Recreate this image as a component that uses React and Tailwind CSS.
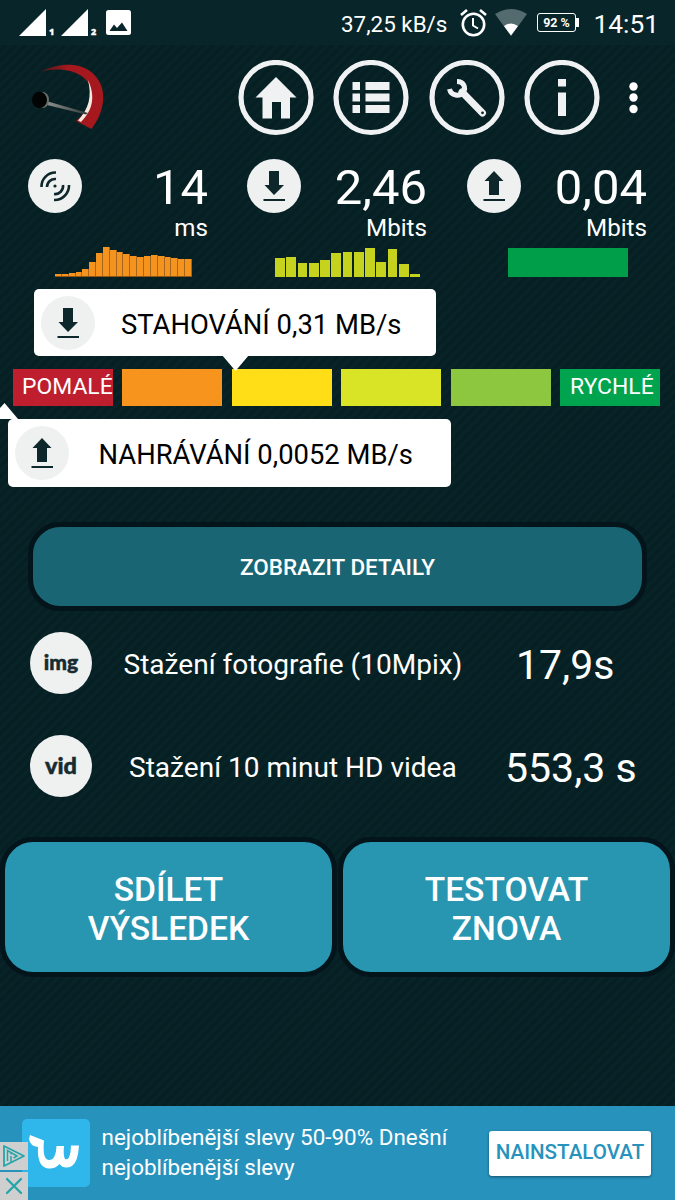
import React from "react";

const ORANGE = [3, 3, 4, 5, 8, 15, 24, 30, 27, 25, 23, 21, 20, 21, 22, 21, 20, 19, 18, 18];
const LIME = [19, 20, 14, 14, 17, 24, 25, 25, 29, 15, 28, 13, 3];

function Signal({ n }) {
  return (
    <div className="flex items-end">
      <svg width="28" height="27" viewBox="0 0 28 27"><path d="M0 27L27 0V27Z" fill="#fff" /></svg>
      <span className="ml-[2px] w-[12px] font-['Open_Sans'] text-[9px] leading-[9px] font-extrabold [-webkit-text-stroke:0.3px_white]">{n}</span>
    </div>
  );
}

function StatusBar() {
  return (
    <div className="flex h-[45px] shrink-0 bg-[#08252a]">
      <div className="flex pt-[9px] pl-[19px] h-[36px]">
        <Signal n="1" />
        <Signal n="2" />
      </div>
      <svg className="ml-[3px] mt-[10px]" width="25" height="25" viewBox="0 0 25 25">
        <rect width="25" height="25" rx="2.5" fill="#fff" />
        <path d="M3.500 21L8 14.500L11 18L16 12.500L21.500 21Z" fill="#08252a" />
      </svg>
      <span className="ml-[210px] w-[119px] mt-[9px] text-[22.400px] leading-[30px] whitespace-nowrap">37,25 kB/s</span>
      <svg className="mt-[9px]" width="27" height="28" viewBox="0 0 27 28" fill="none" stroke="#fff" strokeWidth="2.6">
        <circle cx="13.5" cy="15.5" r="10.7" />
        <path d="M1 6L7 1M26 6L20 1" />
        <path d="M13 9V16.5L18 19.5" strokeWidth="2" />
      </svg>
      <svg className="ml-[7px] mt-[9px]" width="34" height="27" viewBox="0 0 34 27">
        <path d="M1 5Q17 -5 33 5L17 27Z" fill="#536a6e" />
        <path d="M10 17Q17 12 24 17L17 26.500Z" fill="#fff" />
      </svg>
      <div className="ml-[9px] mt-[13px] h-[19px] w-[39px] rounded-[3px] border-[1.5px] border-white text-center text-[12.5px] leading-[17px] font-bold">92 %</div>
      <div className="mt-[18px] h-[9px] w-[2.5px] bg-white" />
      <span className="ml-[15px] mt-[9px] text-[26.300px] leading-[30px]">14:51</span>
    </div>
  );
}

function Ring({ children }) {
  return (
    <svg width="76" height="76" viewBox="0 0 76 76">
      <circle cx="38" cy="37.500" r="35" fill="none" stroke="#eff1f2" strokeWidth="5.2" />
      {children}
    </svg>
  );
}

function Header() {
  return (
    <div className="flex h-[105px] shrink-0 pt-[15px]">
      <svg className="ml-[28px]" width="80" height="76" viewBox="28 60 80 76">
        <defs>
          <linearGradient id="needle" x1="0" x2="1"><stop offset="0" stopColor="#8b8f8d" /><stop offset="1" stopColor="#33393a" /></linearGradient>
          <linearGradient id="arc" x1="0" x2="1"><stop offset="0" stopColor="#4a1719" /><stop offset=".45" stopColor="#a5191e" /></linearGradient>
        </defs>
        <path d="M40 72C68 58 93 65 101 85C107 101 100 118 91.500 129L76 121C86 113 91 102 91 92C90 74 66 65 40 72Z" fill="url(#arc)" />
        <path d="M88 80C95 95 94 109 81 122L78 120.500C89 109 92 96 88 80Z" fill="#f5e9df" />
        <path d="M48 101.500L88 113L86 114.500L47 105Z" fill="url(#needle)" />
        <ellipse cx="42.500" cy="100" rx="6.500" ry="8" fill="#6b706d" />
        <ellipse cx="39.500" cy="100" rx="7.500" ry="8.300" fill="#020303" />
      </svg>
      <div className="ml-[129.500px] flex gap-[19.500px]">
        <Ring><path d="M38 17L58.500 37.500H52V58.500H43V42H34V58.500H24.500V37.500H17.500Z" fill="#eff1f2" /></Ring>
        <Ring>
          <path d="M19.500 22h7.500v8h-7.500zM32.500 22h24v8h-24zM19.500 33.500h7.500v8h-7.500zM32.500 33.500h24v8h-24zM19.500 45h7.500v8h-7.500zM32.500 45h24v8h-24z" fill="#eff1f2" />
        </Ring>
        <Ring>
          <path d="M28 21.500C35 21.500 37 27.500 34.500 32C31 37 22 36 20.500 29" fill="none" stroke="#eff1f2" strokeWidth="5" />
          <path d="M33 32L53.500 53" stroke="#eff1f2" strokeWidth="7" strokeLinecap="round" />
          <circle cx="53.500" cy="52.800" r="1.400" fill="#08252a" />
        </Ring>
        <Ring><path d="M34 19h8v7.500h-8zM34 32.500h8v23.500h-8z" fill="#eff1f2" /></Ring>
      </div>
      <svg className="ml-[28px] mt-[20px]" width="10" height="34" viewBox="0 0 10 34" fill="#fff">
        <circle cx="5.500" cy="6.500" r="4.200" /><circle cx="5.500" cy="17.500" r="4.200" /><circle cx="5.500" cy="29" r="4.200" />
      </svg>
    </div>
  );
}

function Disc({ kind }) {
  return (
    <svg className="shrink-0" width="54" height="54" viewBox="0 0 54 54">
      <circle cx="27" cy="27" r="27" fill="#eff1f1" />
      {kind === "ping" && (
        <g fill="none" stroke="#0d272b" strokeWidth="2.600">
          <circle cx="27" cy="27" r="1.600" fill="#0d272b" stroke="none" />
          <path d="M19 28A8 8 0 0 1 28 20M13.500 28A14 14 0 0 1 28 13.500M35 26A8 8 0 0 1 26 35M41 26A14.500 14.500 0 0 1 26 41" />
        </g>
      )}
      {kind === "down" && <path d="M22 12H32V26H37L27 36L17.500 26H22ZM16.500 40H38V42H16.500Z" fill="#0d272b" />}
      {kind === "up" && <path d="M22 36H32V22H36.500L27 12L17.500 22H22ZM16.500 40H38V42H16.500Z" fill="#0d272b" />}
    </svg>
  );
}

function Metric({ kind, value, unit, className }) {
  return (
    <div className={"flex justify-between " + className}>
      <Disc kind={kind} />
      <div className="flex flex-col items-end whitespace-nowrap">
        <span className="text-[49px] leading-[58px]">{value}</span>
        <span className="text-[24.200px] leading-[30px] -mt-[4px]">{unit}</span>
      </div>
    </div>
  );
}

function Metrics() {
  return (
    <div className="h-[138.500px] shrink-0">
      <div className="flex h-[96.500px] pt-[9px]">
        <Metric kind="ping" value="14" unit="ms" className="ml-[28px] w-[180px]" />
        <Metric kind="down" value="2,46" unit="Mbits" className="ml-[39px] w-[180px]" />
        <Metric kind="up" value="0,04" unit="Mbits" className="ml-[40px] w-[180px]" />
      </div>
      <div className="flex h-[30px] items-end">
        <div className="ml-[55px] flex w-[137px] items-end border-b border-[#8f5513]">
          {ORANGE.map((h, i) => <div key={i} className="flex-1 border-r border-[#a8661a] bg-[#f4941f]" style={{ height: h - 1 }} />)}
        </div>
        <div className="ml-[83px] flex w-[145px] items-end gap-[1.500px]">
          {LIME.map((h, i) => <div key={i} className="flex-1 bg-[#c5d31f]" style={{ height: h }} />)}
        </div>
        <div className="ml-[88px] h-[29px] w-[120px] bg-[#009e49]" />
      </div>
    </div>
  );
}

function SpeedScale() {
  return (
    <div className="h-[233.500px] shrink-0">
      <div className="relative ml-[34px] flex h-[67px] w-[402px] rounded-[5px] bg-white pt-[7px] pl-[7px] text-black">
        <Disc kind="down" />
        <span className="ml-[26px] mt-[13px] text-[27.400px] leading-[32px] whitespace-nowrap">STAHOVÁNÍ 0,31 MB/s</span>
        <svg className="absolute left-[188px] top-[66px]" width="27" height="16" viewBox="0 0 27 16"><path d="M0 0H27L13.500 16Z" fill="#fff" /></svg>
      </div>
      <div className="mt-[13px] ml-[13px] grid h-[37px] w-[647px] grid-cols-6 gap-[9.500px] text-[22.900px] leading-[36px]">
        <div className="overflow-hidden bg-[#be1e2d] pl-[9px]">POMALÉ</div>
        <div className="bg-[#f7941e]" />
        <div className="bg-[#ffde17]" />
        <div className="bg-[#d9e426]" />
        <div className="bg-[#8dc63f]" />
        <div className="overflow-hidden bg-[#00a44f] pl-[10px]">RYCHLÉ</div>
      </div>
      <div className="relative mt-[13px] ml-[8px] flex h-[68px] w-[443px] rounded-[5px] bg-white pt-[7px] pl-[7px] text-black">
        <Disc kind="up" />
        <span className="ml-[29.500px] mt-[13px] text-[27.400px] leading-[32px] whitespace-nowrap">NAHRÁVÁNÍ 0,0052 MB/s</span>
        <svg className="absolute -left-[9px] -top-[16px]" width="19" height="17" viewBox="0 0 19 17"><path d="M0 16V6L5.500 0L19 16Z" fill="#fff" /></svg>
      </div>
    </div>
  );
}

function Download({ badge, badgeClass, label, value, labelClass, valueClass }) {
  return (
    <div className="flex h-[103px] shrink-0">
      <div className={"ml-[30px] flex h-[62px] w-[62px] justify-center rounded-full bg-[#eff0f0] font-['Lato'] font-black text-[#172b30] [-webkit-text-stroke:0.5px_#172b30] " + badgeClass}>{badge}</div>
      <span className={"mt-[16px] w-[370px] text-[28.050px] leading-[33px] whitespace-nowrap " + labelClass}>{label}</span>
      <span className={"mt-[9px] text-[41px] leading-[48px] whitespace-nowrap " + valueClass}>{value}</span>
    </div>
  );
}

function AdBanner() {
  return (
    <div className="flex h-[94px] shrink-0 bg-[#2793bd]">
      <div className="relative w-[90px]">
        <div className="ml-[22px] mt-[13px] h-[68px] w-[68px] rounded-[5px] bg-[#2fb7ec]">
          <svg width="68" height="68" viewBox="0 0 68 68">
            <path d="M8 16L22 21.500Q21 31 22.500 37Q25 43 30.500 40Q34 37 34.500 27H42Q41 36 43 40Q47 42 48.500 33L49 26.500H57Q56 43 50 47Q42 51 37.500 45Q32 51 24 49Q15 46 16 28Q8 27 7 20Z" fill="#fff" />
          </svg>
        </div>
        <div className="absolute left-0 top-[36px] flex flex-col gap-[2px]">
          <svg className="bg-[#cfcfcf]" width="28" height="28" viewBox="0 0 28 28" fill="none" stroke="#24a5aa" strokeWidth="1.800">
            <path d="M4 4V24L24 14Z" strokeLinejoin="round" /><path d="M7.500 19V8.500L17 14L13.500 16M11 14v6M11 10.500v2" strokeWidth="1.500" />
          </svg>
          <svg className="bg-[#cfcfcf]" width="28" height="28" viewBox="0 0 28 28" stroke="#24a5aa" strokeWidth="2.300" strokeLinecap="round"><path d="M7 7L21 21M21 7L7 21" /></svg>
        </div>
      </div>
      <div className="ml-[11.500px] mt-[16px] w-[387.500px] text-[22.430px] leading-[30px] whitespace-nowrap">
        <div>nejoblíbenější slevy 50-90% Dnešní</div>
        <div>nejoblíbenější slevy</div>
      </div>
      <div className="mt-[24.500px] h-[45px] w-[162px] rounded-[3px] bg-white text-center text-[20.600px] leading-[43px] font-medium text-[#2793bd] shadow-[0_1px_3px_#0007]">NAINSTALOVAT</div>
    </div>
  );
}

export default function App() {
  return (
    <div className="flex h-[1200px] w-[675px] flex-col overflow-hidden bg-[#072126] bg-[repeating-linear-gradient(135deg,#061f23_0px,#061f23_2px,#082428_4px,#082428_5px,#061f23_7px)] font-['Roboto',sans-serif] text-white">
      <StatusBar />
      <Header />
      <Metrics />
      <SpeedScale />
      <button className="ml-[28px] h-[89px] w-[619px] shrink-0 rounded-[32px] border-[5px] border-[#03141a] bg-[#1a6573] pt-[2px] text-[22.500px] font-medium">ZOBRAZIT DETAILY</button>
      <div className="h-[226px] shrink-0 pt-[20.500px]">
        <Download badge="img" badgeClass="text-[21px] leading-[59px]" label="Stažení fotografie (10Mpix)" value="17,9s" labelClass="ml-[31.500px]" valueClass="ml-[22.500px]" />
        <Download badge="vid" badgeClass="text-[23.500px] leading-[61px]" label="Stažení 10 minut HD videa" value="553,3 s" labelClass="ml-[37px]" valueClass="ml-[6px]" />
      </div>
      <div className="flex h-[269px] shrink-0 gap-px text-[33.600px] leading-[39px] font-medium">
        <button className="h-[140px] w-[337px] rounded-[33px] border-[5px] border-[#03141a] bg-[#2896b0] pt-[3px]">SDÍLET<br />VÝSLEDEK</button>
        <button className="h-[140px] w-[337px] rounded-[33px] border-[5px] border-[#03141a] bg-[#2896b0] pt-[3px]">TESTOVAT<br />ZNOVA</button>
      </div>
      <AdBanner />
    </div>
  );
}
